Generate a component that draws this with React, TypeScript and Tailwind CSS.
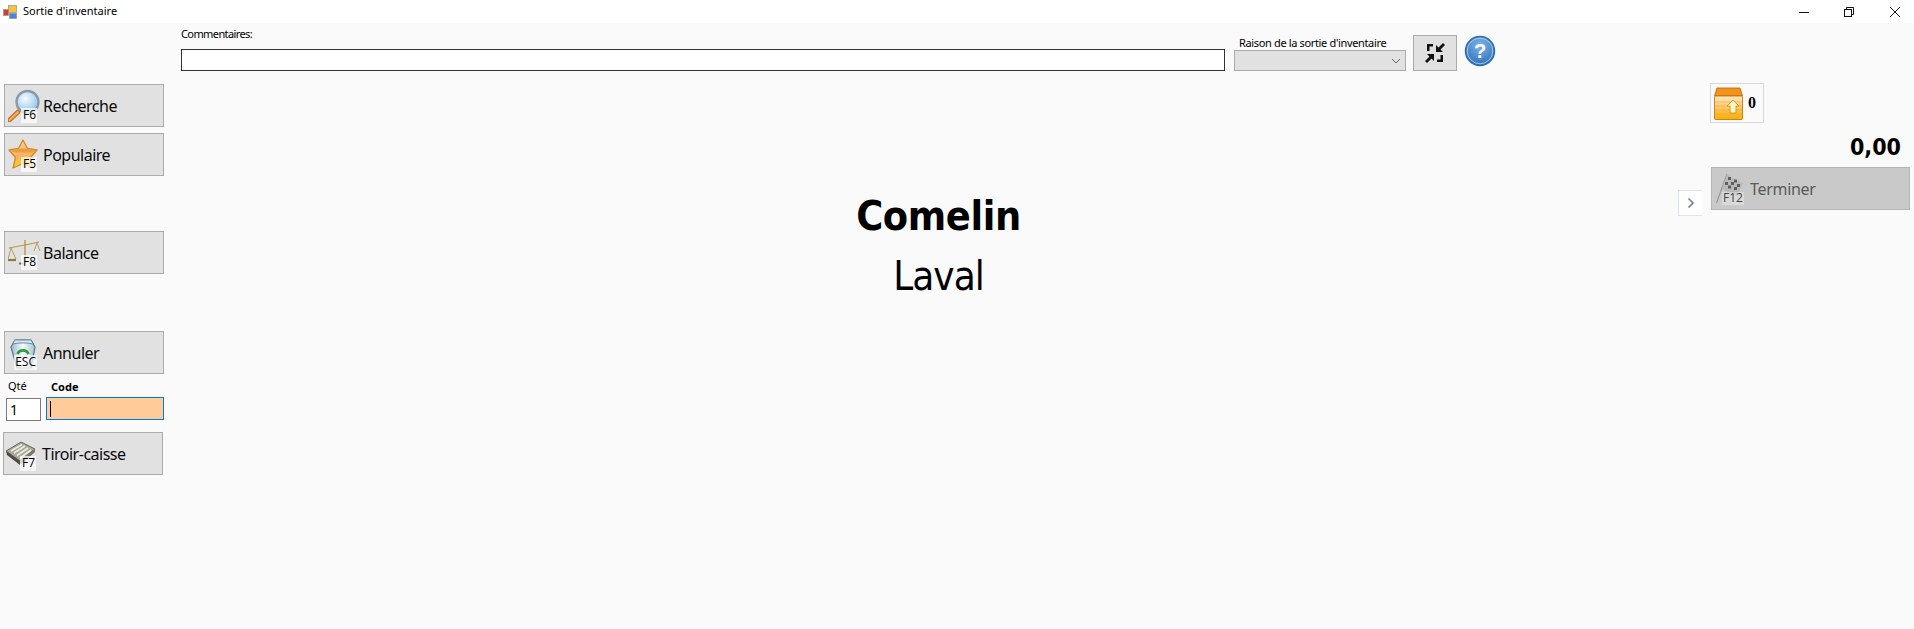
import React from 'react';

const uiFont = "font-['Noto_Sans',sans-serif]";

function KeyTag({ label, wide }: { label: string; wide?: boolean }) {
  return (
    <span
      className={`absolute top-[21px] flex h-[15px] items-center justify-end bg-white/70 pr-[1px] font-['Open_Sans',sans-serif] text-[12px] leading-none tracking-normal text-black ${
        wide ? 'left-[6px] w-[23px]' : 'left-[13px] w-[16px]'
      }`}
    >
      {label}
    </span>
  );
}

function SearchIcon() {
  return (
    <svg width="34" height="34" viewBox="0 0 34 34">
      <defs>
        <radialGradient id="lens" cx="40%" cy="35%" r="70%">
          <stop offset="0" stopColor="#f4fbff" />
          <stop offset="1" stopColor="#8cc3ea" />
        </radialGradient>
      </defs>
      <path d="M10 24 L1.5 32" stroke="#c9701c" strokeWidth="4.5" strokeLinecap="round" />
      <path d="M10 24 L1.5 32" stroke="#f4b56b" strokeWidth="1.8" strokeLinecap="round" />
      <circle cx="19.5" cy="14" r="11" fill="url(#lens)" stroke="#8d9aa5" strokeWidth="2.4" />
    </svg>
  );
}

function StarIcon() {
  return (
    <svg width="34" height="34" viewBox="0 0 34 34">
      <defs>
        <linearGradient id="star" x1="0" y1="0" x2="0.3" y2="1">
          <stop offset="0" stopColor="#fbd9ae" />
          <stop offset="0.6" stopColor="#f6b26a" />
          <stop offset="1" stopColor="#f7d21b" />
        </linearGradient>
      </defs>
      <path
        d="M15 3 L19.5 11.5 L29 13 L22.5 20.5 L24.5 31 L15 26.5 L5 31 L7.5 20.5 L1 13 L10.5 11.5 Z"
        fill="url(#star)"
        stroke="#d9861f"
        strokeWidth="1.3"
        strokeLinejoin="round"
      />
      <path d="M1.5 13 L10.5 11.5 L19.5 11.5 L28.5 13 L24 15.5 L6 15.5 Z" fill="#e79a35" opacity="0.85" />
    </svg>
  );
}

function ScaleIcon() {
  return (
    <svg width="34" height="34" viewBox="0 0 34 34" fill="none" stroke="#b7964f" strokeWidth="0.9">
      <path d="M17 5 V28" strokeWidth="1.6" stroke="#c09f57" />
      <path d="M1 13 L17 10 L31 7" strokeWidth="1.2" />
      <path d="M3 13 L0 24 M3 13 L8 24" />
      <path d="M0 25 H8" stroke="#8f7a3c" strokeWidth="2.2" />
      <path d="M29 8 L26 16 M29 8 L32 16" />
      <path d="M11 28.5 H15" stroke="#8a6d2c" strokeWidth="2" />
    </svg>
  );
}

function BinIcon() {
  return (
    <svg width="34" height="34" viewBox="0 0 34 34">
      <defs>
        <linearGradient id="bin" x1="0" y1="0" x2="1" y2="0">
          <stop offset="0" stopColor="#9bbbd0" />
          <stop offset="0.5" stopColor="#f5fafd" />
          <stop offset="1" stopColor="#a6c2d5" />
        </linearGradient>
      </defs>
      <path d="M7 5 H23 L27 12 L23 33 H9 L3 12 Z" fill="url(#bin)" stroke="#55788f" strokeWidth="1.2" />
      <path d="M7 5 H23 L25.5 9 C18 7.5 12 7.5 4.5 9 Z" fill="#d8e6ef" stroke="#55788f" strokeWidth="0.8" />
      <path d="M9.5 19 A6 6 0 0 1 20.5 19" fill="none" stroke="#2e9a3a" strokeWidth="2.6" />
    </svg>
  );
}

function DrawerIcon() {
  return (
    <svg width="34" height="34" viewBox="0 0 34 34" className="-ml-[1px]">
      <path d="M0 15 L15 6 L29 13 L14 25 Z" fill="#a9a99c" stroke="#4f4f47" strokeWidth="0.8" />
      <path d="M0 15 L14 25 V29 L1 19 Z" fill="#4c4c45" />
      <path d="M14 25 L29 13 V16 L14 29 Z" fill="#77776c" />
      <path d="M5 15 L16 8.5 M8 17 L19 10 M11 19.5 L22 12 M14 22 L25 14" stroke="#ececdf" strokeWidth="1.6" />
    </svg>
  );
}

function FlagIcon() {
  return (
    <svg width="30" height="36" viewBox="0 0 30 36">
      <path d="M0.5 33 L11 4" stroke="#9a9a9a" strokeWidth="1.2" />
      <path d="M11 4 C16 9 21 10 27 13 L21 26 C15 23 9 21 6 19 Z" fill="#b9b9b9" />
      <path
        d="M12 7 h3 v3 h-3 z M18 9.5 h3 v3 h-3 z M9 12 h3 v3 h-3 z M15 12 h3 v3 h-3 z M21 14 h3 v3 h-3 z M12 15.5 h3 v3 h-3 z M18 17 h3 v3 h-3 z"
        fill="#5f5f5f"
      />
    </svg>
  );
}

function PosButton({
  label,
  keyName,
  icon,
  wideKey,
  left = 'ml-[4px]',
}: {
  label: string;
  keyName: string;
  icon: React.ReactNode;
  wideKey?: boolean;
  left?: string;
}) {
  return (
    <button
      className={`${left} flex h-[43px] w-[160px] items-center border border-[#ababab] bg-[#e1e1e1] pl-[3px] text-left text-[16px] tracking-[-0.5px] text-[#0b0b0b]`}
    >
      <span className="relative h-[38px] w-[34px] shrink-0 pt-[1px]">
        {icon}
        <KeyTag label={keyName} wide={wideKey} />
      </span>
      <span className="pl-[1px] pt-[1px]">{label}</span>
    </button>
  );
}

export default function App() {
  return (
    <div className={`flex h-[629px] w-[1914px] flex-col overflow-hidden bg-white text-black ${uiFont}`}>
      {/* barre de titre */}
      <div className="flex h-[23px] shrink-0 items-center bg-white pl-[3px] text-[11px]">
        <svg width="14" height="14" viewBox="0 0 14 14" className="mr-[6px]">
          <rect x="5.5" y="0.5" width="8" height="7" fill="#f5c542" stroke="#9a9a9a" strokeWidth="0.8" />
          <rect x="0.5" y="4.5" width="5" height="6" fill="#d93a2b" stroke="#9a9a9a" strokeWidth="0.8" />
          <rect x="6.5" y="8.5" width="7" height="5" fill="#4a86d8" stroke="#9a9a9a" strokeWidth="0.8" />
        </svg>
        <span>Sortie d'inventaire</span>
        <div className="ml-auto flex items-center pr-[14px]">
          <svg width="10" height="10" viewBox="0 0 10 10" stroke="#111" fill="none" className="mr-[35px]">
            <path d="M0 5.5 H10" />
          </svg>
          <svg width="10" height="10" viewBox="0 0 10 10" stroke="#111" fill="none" className="mr-[36px]">
            <rect x="0.5" y="2.5" width="7" height="7" />
            <path d="M2.5 2.5 V0.5 H9.5 V7.5 H7.5" />
          </svg>
          <svg width="10" height="10" viewBox="0 0 10 10" stroke="#111" fill="none">
            <path d="M0 0 L10 10 M10 0 L0 10" />
          </svg>
        </div>
      </div>

      <div className="flex flex-1 bg-[#fafafa]">
        {/* colonne de gauche */}
        <div className="w-[181px] shrink-0">
          <div className="mt-[61px]">
            <PosButton label="Recherche" keyName="F6" icon={<SearchIcon />} />
          </div>
          <div className="mt-[6px]">
            <PosButton label="Populaire" keyName="F5" icon={<StarIcon />} />
          </div>
          <div className="mt-[55px]">
            <PosButton label="Balance" keyName="F8" icon={<ScaleIcon />} />
          </div>
          <div className="mt-[57px]">
            <PosButton label="Annuler" keyName="ESC" icon={<BinIcon />} wideKey />
          </div>
          <div className="ml-[6px] mt-[5px] flex gap-[5px]">
            <div className="w-[35px]">
              <div className="h-[18px] pl-[2px] text-[11px] leading-[13px]">Qté</div>
              <input
                readOnly
                value="1"
                className="h-[23px] w-[35px] border border-[#7a7a7a] bg-white pl-[3px] text-[14px] outline-none"
              />
            </div>
            <div className="w-[118px]">
              <div className="h-[18px] pl-[5px] text-[11px] font-bold leading-[15px]">Code</div>
              <div className="flex h-[23px] w-[118px] items-center border border-[#0078d7] bg-[#ffcc99] pl-[3px]">
                <span className="h-[16px] w-px bg-black" />
              </div>
            </div>
          </div>
          <div className="mt-[11px]">
            <PosButton label="Tiroir-caisse" keyName="F7" icon={<DrawerIcon />} left="ml-[3px]" />
          </div>
        </div>

        {/* zone centrale */}
        <div className="flex min-w-0 flex-1 flex-col">
          <div className="mt-[3px] flex items-start">
            <div className="w-[1044px]">
              <div className="h-[23px] text-[11px] leading-[15px] tracking-[-0.6px]">Commentaires:</div>
              <div className="h-[22px] border border-[#333] bg-white" />
            </div>
            <div className="ml-[9px] w-[172px]">
              <div className="mt-[9px] h-[15px] whitespace-nowrap pl-[5px] text-[11px] leading-[15px] tracking-[-0.35px]">
                Raison de la sortie d'inventaire
              </div>
              <div className="flex h-[21px] items-center justify-end border border-[#ababab] bg-[#e1e1e1] pr-[4px]">
                <svg width="10" height="6" viewBox="0 0 10 6" fill="none" stroke="#666">
                  <path d="M1 1 L5 5 L9 1" />
                </svg>
              </div>
            </div>
            <button className="ml-[7px] mt-[9px] flex h-[36px] w-[44px] items-center justify-center border border-[#ababab] bg-[#e1e1e1]">
              <svg width="22" height="22" viewBox="0 0 22 22" fill="#111">
                <path d="M19 1 L21 3 L16.5 7.5 L19 10 L12 10 L12 3 L14.5 5.5 Z" />
                <path d="M3 21 L1 19 L5.5 14.5 L3 12 L10 12 L10 19 L7.5 16.5 Z" />
                <path d="M3 2 H9 V4.5 H5.5 V9 H3 Z" />
                <path d="M19 20 H13 V17.5 H16.5 V13 H19 Z" />
              </svg>
            </button>
            <svg width="32" height="32" viewBox="0 0 32 32" className="ml-[7px] mt-[9px]">
              <defs>
                <radialGradient id="help" cx="50%" cy="30%" r="75%">
                  <stop offset="0" stopColor="#7db4e6" />
                  <stop offset="1" stopColor="#2a6cb5" />
                </radialGradient>
              </defs>
              <circle cx="16" cy="16" r="14.5" fill="url(#help)" stroke="#2f6fb0" strokeWidth="1.5" />
              <circle cx="16" cy="16" r="12.8" fill="none" stroke="#b7d5f0" strokeWidth="0.8" />
              <text
                x="16"
                y="23"
                textAnchor="middle"
                fill="#fff"
                fontSize="20"
                fontWeight="700"
                fontFamily="Liberation Sans, sans-serif"
              >
                ?
              </text>
            </svg>
          </div>

          <div className="mt-[123px] pl-[18px] text-center font-['DejaVu_Sans',sans-serif] [font-stretch:condensed]">
            <div className="text-[41px] font-bold leading-[44px] tracking-[-0.4px]">Comelin</div>
            <div className="mt-[16px] text-[40px] leading-[44px] tracking-[-1px]">Laval</div>
          </div>
        </div>

        {/* colonne de droite */}
        <div className="w-[236px] shrink-0">
          <div className="ml-[32px] mt-[60px] flex h-[40px] w-[54px] items-center border border-[#d9d9d9] pl-[3px]">
            <svg width="29" height="33" viewBox="0 0 29 33" className="shrink-0">
              <defs>
                <linearGradient id="box" x1="0" y1="0" x2="0" y2="1">
                  <stop offset="0" stopColor="#fde9c4" />
                  <stop offset="0.55" stopColor="#fcc65a" />
                  <stop offset="1" stopColor="#f7b000" />
                </linearGradient>
              </defs>
              <path d="M3 1 H26 L28.5 9 H0.5 Z" fill="#f3931a" stroke="#b85f08" strokeWidth="0.8" />
              <rect x="0.5" y="9" width="28" height="23.5" rx="1" fill="url(#box)" stroke="#c06a08" strokeWidth="0.8" />
              <path d="M1 15 H28 M1 19 H28 M1 23 H28 M1 27 H28" stroke="#e9951a" strokeWidth="0.7" opacity="0.6" />
              <path d="M19 13 L25 19 H22 V26 H16 V19 H13 Z" fill="#fff2c4" stroke="#c58a1a" strokeWidth="0.8" />
            </svg>
            <span className="ml-[5px] font-['Liberation_Serif',serif] text-[16px] font-bold">0</span>
          </div>
          <div className="mt-[5px] h-[39px] pr-[13px] text-right font-['DejaVu_Sans',sans-serif] text-[23px] font-bold leading-[39px] [font-stretch:condensed]">
            0,00
          </div>
          <div className="flex items-end">
            <div className="mb-[-6px] flex h-[26px] w-[24px] items-center justify-center border border-r-0 border-[#dde3ea] bg-white">
              <svg width="8" height="12" viewBox="0 0 8 12" fill="none" stroke="#6b7f95" strokeWidth="1.6">
                <path d="M1.5 1.5 L6 6 L1.5 10.5" />
              </svg>
            </div>
            <button className="ml-[9px] flex h-[43px] w-[199px] items-center border border-[#b5b5b5] bg-[#c9c9c9] pl-[4px] text-left text-[16px] tracking-[-0.3px] text-[#5a5a5a]">
              <span className="relative h-[38px] w-[34px] shrink-0">
                <FlagIcon />
                <span className="absolute left-[6px] top-[22px] flex h-[13px] w-[22px] items-center justify-center bg-white/30 font-['Open_Sans',sans-serif] text-[12px] leading-none tracking-normal text-[#444]">
                  F12
                </span>
              </span>
              <span className="pt-[1px]">Terminer</span>
            </button>
          </div>
        </div>
      </div>
    </div>
  );
}
